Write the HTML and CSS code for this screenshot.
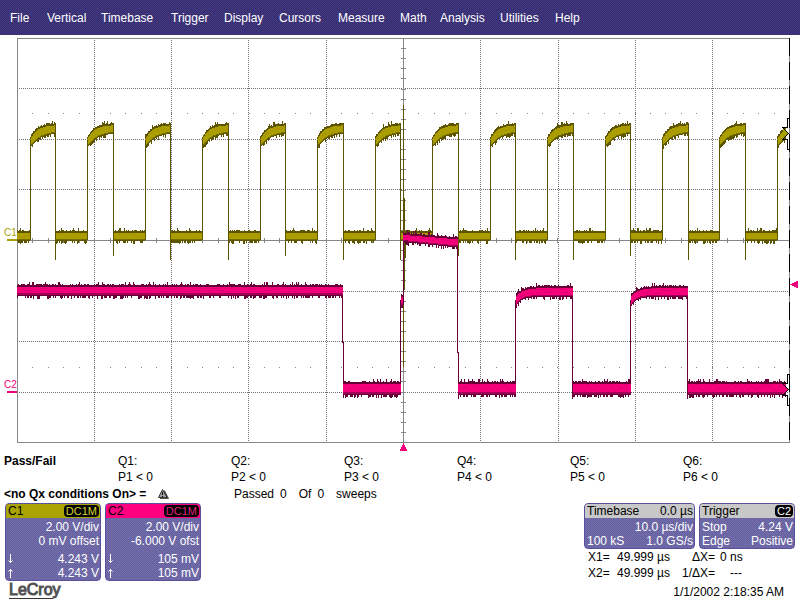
FILE: index.html
```
<!DOCTYPE html>
<html lang="en">
<head>
<meta charset="utf-8">
<title>LeCroy Oscilloscope</title>
<link rel="stylesheet" href="styles.css">
</head>
<body>
<nav class="menu" aria-label="Main menu">
  <button type="button">File</button>
  <button type="button">Vertical</button>
  <button type="button">Timebase</button>
  <button type="button">Trigger</button>
  <button type="button">Display</button>
  <button type="button">Cursors</button>
  <button type="button">Measure</button>
  <button type="button">Math</button>
  <button type="button">Analysis</button>
  <button type="button">Utilities</button>
  <button type="button">Help</button>
</nav>

<main>
  <svg class="scope" viewBox="0 35 800 417" role="img" aria-label="Channel traces">
    <g id="grid"></g>
    <g id="traces"></g>
    <g class="markers">
      <text class="c1" x="4" y="236">C1</text>
      <path class="c1" d="M7 239h10v2h-10z"/>
      <text class="c2" x="4" y="388">C2</text>
      <path class="c2" d="M7 391h10v2h-10z"/>
      <path class="c2" d="M403.500 443l4 8h-8z"/>
      <path class="c2" d="M790 284.500l8-4v8z"/>
      <path class="c1" d="M783 128l6 5.500-6 5.500z"/>
      <path class="c2" d="M783 384l6 5-6 6z"/>
      <path class="bracket" d="M789.500 118.500h-2v9h-5l6 6-6 6h5v10h2"/>
      <path class="bracket" d="M789.500 374.500h-2v9h-5l6 6-6 6h5v10h2"/>
    </g>
  </svg>

  <section class="passfail" aria-label="Pass/Fail">
    <dl class="tests">
      <div class="test"><dt class="strong">Pass/Fail</dt></div>
      <div class="test"><dt>Q1:</dt><dd>P1 &lt; 0</dd></div>
      <div class="test"><dt>Q2:</dt><dd>P2 &lt; 0</dd></div>
      <div class="test"><dt>Q3:</dt><dd>P3 &lt; 0</dd></div>
      <div class="test"><dt>Q4:</dt><dd>P4 &lt; 0</dd></div>
      <div class="test"><dt>Q5:</dt><dd>P5 &lt; 0</dd></div>
      <div class="test"><dt>Q6:</dt><dd>P6 &lt; 0</dd></div>
    </dl>
    <div class="verdict">
      <div class="condition"><strong>&lt;no Qx conditions On&gt; =</strong>
        <svg class="warn" viewBox="0 0 11 10" aria-hidden="true"><path d="M6.500 1.500L10.500 9.500H2" fill="#555" stroke="#555"/><path d="M4.500.5L.5 8.500h8.500z" fill="#a0a0a0" stroke="#333"/><path d="M4.500 3v3M4.500 7v1" stroke="#000"/></svg>
      </div>
      <div class="sweeps"><span>Passed</span><span>0</span><span class="of">Of</span><span>0</span><span class="of">sweeps</span></div>
    </div>
  </section>

  <footer class="status">
    <div class="left">
      <div class="boxes">
        <section class="box">
          <header class="head olive"><span>C1</span><span class="tag">DC1M</span></header>
          <div class="row end">2.00 V/div</div>
          <div class="row end">0 mV offset</div>
          <div class="row gap"><svg class="arrow" viewBox="0 0 6 10" aria-hidden="true"><path d="M2.500 0v8.500M.5 6.500l2 2 2-2"/></svg><span>4.243 V</span></div>
          <div class="row"><svg class="arrow" viewBox="0 0 6 10" aria-hidden="true"><path d="M2.500 10V1.500M.5 3.500l2-2 2 2"/></svg><span>4.243 V</span></div>
        </section>
        <section class="box">
          <header class="head pink"><span>C2</span><span class="tag">DC1M</span></header>
          <div class="row end">2.00 V/div</div>
          <div class="row end">-6.000 V ofst</div>
          <div class="row gap"><svg class="arrow" viewBox="0 0 6 10" aria-hidden="true"><path d="M2.500 0v8.500M.5 6.500l2 2 2-2"/></svg><span>105 mV</span></div>
          <div class="row"><svg class="arrow" viewBox="0 0 6 10" aria-hidden="true"><path d="M2.500 10V1.500M.5 3.500l2-2 2 2"/></svg><span>105 mV</span></div>
        </section>
      </div>
      <div class="logo"><span class="line">LeCro</span>y</div>
    </div>
    <div class="right">
      <div class="boxes">
        <section class="box wide">
          <header class="head silver"><span>Timebase</span><span>0.0 µs</span></header>
          <div class="row end">10.0 µs/div</div>
          <div class="row"><span>100 kS</span><span>1.0 GS/s</span></div>
        </section>
        <section class="box">
          <header class="head silver"><span>Trigger</span><span class="tag white">C2</span></header>
          <div class="row"><span>Stop</span><span>4.24 V</span></div>
          <div class="row"><span>Edge</span><span>Positive</span></div>
        </section>
      </div>
      <dl class="cursors">
        <dt>X1=</dt><dd>49.999 µs</dd><dt class="delta">ΔX=</dt><dd>0 ns</dd>
        <dt>X2=</dt><dd>49.999 µs</dd><dt class="delta">1/ΔX=</dt><dd class="none">---</dd>
      </dl>
      <time class="clock">1/1/2002 2:18:35 AM</time>
    </div>
  </footer>
</main>
<script src="scope.js"></script>
</body>
</html>
```
FILE: styles.css
```
* { box-sizing: border-box; }
body {
  margin: 0;
  background: #fff;
  color: #000;
  font: 12px/16px "Liberation Sans", Arial, sans-serif;
}
dl, dd { margin: 0; }

.menu {
  display: grid;
  grid-template-columns: 37fr 54fr 70fr 53fr 55fr 59fr 62fr 40fr 60fr 55fr 245fr;
  align-items: center;
  height: 35px;
  padding-left: 10px;
  background: repeating-conic-gradient(#332b73 0 25%, #453b7c 0 50%) 0 0 / 2px 2px;
}
.menu button {
  padding: 0;
  border: 0;
  background: none;
  color: #fff;
  font: inherit;
  text-align: left;
}

.scope { display: block; width: 100%; height: auto; }
.scope path { shape-rendering: crispEdges; fill: none; }
.scope .frame { stroke: #888; }
.scope .dotted { stroke: #746c74; stroke-dasharray: 1 1; }
.scope .edge { stroke: #000; stroke-dasharray: 18 6; }
.markers text { font-size: 10px; }
.scope .c1 { fill: #a8a000; }
.scope .c2 { fill: #f0007c; }
.scope .bracket { stroke: #000; }

.passfail { padding: 1px 4px 0; }
.tests { display: grid; grid-template-columns: 114fr repeat(5, 113fr) 113fr; }
.strong { font-weight: bold; }
.verdict { display: grid; grid-template-columns: 230fr 562fr; margin-top: 1px; }
.condition { display: flex; align-items: center; gap: 12px; }
.warn { width: 11px; height: 10px; }
.sweeps { display: flex; gap: 6px; }
.sweeps .of { margin-left: 6px; }

.status { display: flex; justify-content: space-between; padding: 1px 5px 0; }
.boxes { display: flex; gap: 4px; }
.box {
  width: 96px;
  overflow: hidden;
  border: 1px solid #5a50a0;
  border-radius: 4px;
  background: repeating-conic-gradient(#62609c 0 25%, #7870ae 0 50%) 0 0 / 2px 2px;
  color: #fff;
  line-height: 14px;
}
.box.wide { width: 111px; }
.head {
  display: flex;
  justify-content: space-between;
  align-items: center;
  height: 14px;
  margin-bottom: 2px;
  padding: 0 1px 0 2px;
  color: #000;
}
.olive { background: #aaa400; }
.pink { background: #ff0080; }
.silver { background: #c8c8c8; }
.tag { padding: 0 2px; border-radius: 4px; background: #000; font-size: 11px; line-height: 12px; }
.olive .tag { color: #d8d430; }
.pink .tag { color: #e02080; }
.tag.white { color: #fff; }
.row { display: flex; justify-content: space-between; align-items: center; padding: 0 1px 0 2px; }
.row.end { justify-content: flex-end; }
.row.gap { margin-top: 4px; }
.arrow { width: 6px; height: 10px; fill: none; stroke: #fff; }
.logo { margin-left: 4px; color: #444; font-size: 16px; line-height: 18px; -webkit-text-stroke: 1px #555; }
.logo .line { border-bottom: 1px solid #333; }

.right { display: flex; flex-direction: column; }
.cursors { display: grid; grid-template-columns: 28px 64px 35px 1fr; padding-left: 4px; }
.cursors .delta { text-align: right; }
.cursors dd { padding-left: 1px; }
.cursors .delta + dd { padding-left: 5px; }
.cursors .none { text-indent: 10px; }
.clock { align-self: flex-end; margin: 3px 11px 0 0; }
```
FILE: scope.js
```
const NS = "http://www.w3.org/2000/svg";
const grid = document.getElementById("grid");
const traces = document.getElementById("traces");

function addPath(parent, d, attrs) {
  const p = document.createElementNS(NS, "path");
  p.setAttribute("d", d);
  for (const key in attrs) p.setAttribute(key, attrs[key]);
  parent.appendChild(p);
}

// Graticule: 10 x 8 divisions with a centre cross.
const columns = [94, 171, 248, 326, 480, 558, 635, 712];
const rows = [88, 139, 189, 291, 341, 392];
let d = "";
columns.forEach(x => { d += `M${x + 0.5} 40V442`; });
rows.forEach(y => { d += `M19 ${y + 0.5}H789`; });
addPath(grid, d, { class: "dotted" });

d = "M17.5 38.5H789M17.5 38V442.5H789.5M789.5 38V442M403.5 38V442M17 240.5H789";
for (let i = 1; i < 40; i++) {
  const y = Math.round(38 + i * 10.1) + 0.5;
  d += `M401 ${y}h5`;
}
for (let i = 1; i < 50; i++) {
  const x = Math.round(17 + i * 15.44) + 0.5;
  d += `M${x} 238v5M${x} 113v1M${x} 367v1`;
}
addPath(grid, d, { class: "frame" });
addPath(grid, "M789.5 38V442", { class: "edge" });

// Repeatable noise source for the ragged band edges.
let seed = 7;
function noise() {
  seed = (seed * 1103515245 + 12345) % 2147483648;
  return seed / 2147483648;
}

const OLIVE = { dark: "#5c5400", low: "#786c00", bright: "#a8a000", speck: "#b88c00" };
const PINK = { dark: "#680038", low: "#a00058", bright: "#f8007c", speck: "#d80070" };

// Draws a noisy band; top and bottom are functions of the distance from its start.
function band(x0, x1, top, bottom, color, lower) {
  let dark = "", low = "", bright = "", speck = "";
  for (let x = x0; x < x1; x++) {
    const t = Math.round(top(x - x0));
    const b = Math.round(bottom(x - x0));
    const up = noise() < 0.08 ? 3 : noise() < 0.4 ? 1 : 0;
    const down = noise() < 0.1 ? 3 : noise() < 0.4 ? 2 : 0;
    dark += `M${x + 0.5} ${t - up}V${b + down}`;
    low += `M${x + 0.5} ${b - lower}V${b - 1}`;
    bright += `M${x + 0.5} ${t + 2}V${b - lower}`;
    const span = b - lower - t - 3;
    speck += `M${x + 0.5} ${t + 2 + Math.floor(noise() * span)}v1`;
  }
  addPath(traces, dark, { stroke: color.dark });
  addPath(traces, low, { stroke: color.low });
  addPath(traces, bright, { stroke: color.bright });
  addPath(traces, speck, { stroke: color.speck });
}
const flat = y => () => y;
const settle = (from, to, tau) => x => to + (from - to) * Math.exp(-x / tau);

// Channel 1: square clock.
let edges = "";
let lowStart = 17;
for (let i = 0; i < 14; i++) {
  const rise = Math.round(30 + i * 57.45);
  const fall = Math.min(Math.round(55 + i * 57.5), 786);
  band(lowStart, rise, flat(231), flat(241), OLIVE, 2);
  band(rise, fall, settle(137, 123, 7), settle(148, 133, 9), OLIVE, 2);
  edges += `M${rise + 0.5} 140V240`;
  if (i < 13) edges += `M${fall + 0.5} 123V${i % 3 === 1 ? 256 : 260}`;
  lowStart = fall + 1;
}
edges += "M403.5 105V367M404.5 198V290M405.5 240V258";
addPath(traces, edges, { stroke: OLIVE.dark });

// Channel 2: data pattern.
addPath(traces,
  "M342.5 286V343M343.5 342V398M400.5 300V395M403.5 238V305M457.5 238V353M458.5 352V399" +
  "M515.5 300V395M572.5 288V399M630.5 300V395M687.5 288V399",
  { stroke: PINK.dark });
band(17, 343, flat(285), flat(296), PINK, 3);
band(343, 401, flat(382), flat(395), PINK, 3);
band(401, 403, flat(295), flat(306), PINK, 3);
band(403, 458, x => 233 + x * 0.08, x => 242 + x * 0.1, PINK, 2);
band(458, 516, flat(382), flat(395), PINK, 3);
band(516, 573, settle(294, 286, 7), settle(306, 297, 5), PINK, 2);
band(573, 631, flat(382), flat(395), PINK, 3);
band(631, 688, settle(294, 286, 7), settle(306, 297, 5), PINK, 2);
band(688, 786, flat(382), flat(395), PINK, 3);
```
